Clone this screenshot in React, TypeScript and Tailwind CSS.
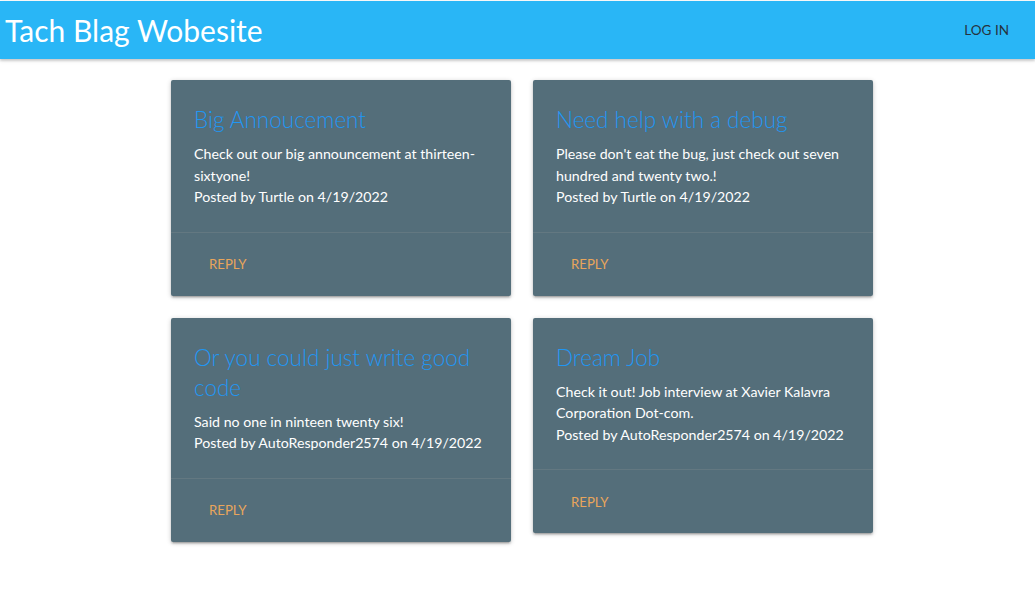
const POSTS = [
  {
    title: "Big Annoucement",
    body: "Check out our big announcement at thirteen-sixtyone!",
    author: "Turtle",
    date: "4/19/2022",
  },
  {
    title: "Need help with a debug",
    body: "Please don't eat the bug, just check out seven hundred and twenty two.!",
    author: "Turtle",
    date: "4/19/2022",
  },
  {
    title: "Or you could just write good code",
    body: "Said no one in ninteen twenty six!",
    author: "AutoResponder2574",
    date: "4/19/2022",
  },
  {
    title: "Dream Job",
    body: "Check it out! Job interview at Xavier Kalavra Corporation Dot-com.",
    author: "AutoResponder2574",
    date: "4/19/2022",
  },
];

function PostCard({ post }: { post: (typeof POSTS)[number] }) {
  return (
    <div className="bg-[#546e7a] rounded-[2px] shadow-[0_2px_2px_0_rgba(0,0,0,0.14),0_3px_1px_-2px_rgba(0,0,0,0.12),0_1px_5px_0_rgba(0,0,0,0.2)]">
      <div className="p-6 pl-[23px] pr-[22px]">
        <h2 className="text-[22.5px] leading-[30px] font-light text-[#2196f3] mb-2 mt-px">
          {post.title}
        </h2>
        <p className="text-[14.2px] leading-[21.5px] text-white">{post.body}</p>
        <p className="text-[14.2px] leading-[21.5px] text-white">
          Posted by {post.author} on {post.date}
        </p>
      </div>
      <div className="border-t border-[rgba(160,160,160,0.2)] h-[64px] flex items-center pt-[2px] px-6">
        <button className="px-[14px] text-[13.2px] uppercase text-[#e8a55c] cursor-pointer">
          Reply
        </button>
      </div>
    </div>
  );
}

export default function App() {
  return (
    <div className="min-h-screen bg-white font-['Lato',sans-serif] pt-px">
      {/* Nav */}
      <nav className="h-[58px] bg-[#29b6f6] flex items-center justify-between shadow-[0_2px_2px_0_rgba(0,0,0,0.14),0_1px_5px_0_rgba(0,0,0,0.12)]">
        <span className="pl-[5px] text-[30px] text-white leading-none">Tach Blag Wobesite</span>
        <a className="pr-[26px] text-[13.5px] text-[#26323d] uppercase">Log In</a>
      </nav>

      {/* Posts */}
      <main className="pt-[21px] flex justify-center">
        <div className="grid grid-cols-[340px_340px] gap-[22px] items-start ml-[9px]">
          {POSTS.map((p) => (
            <PostCard key={p.title} post={p} />
          ))}
        </div>
      </main>
    </div>
  );
}
